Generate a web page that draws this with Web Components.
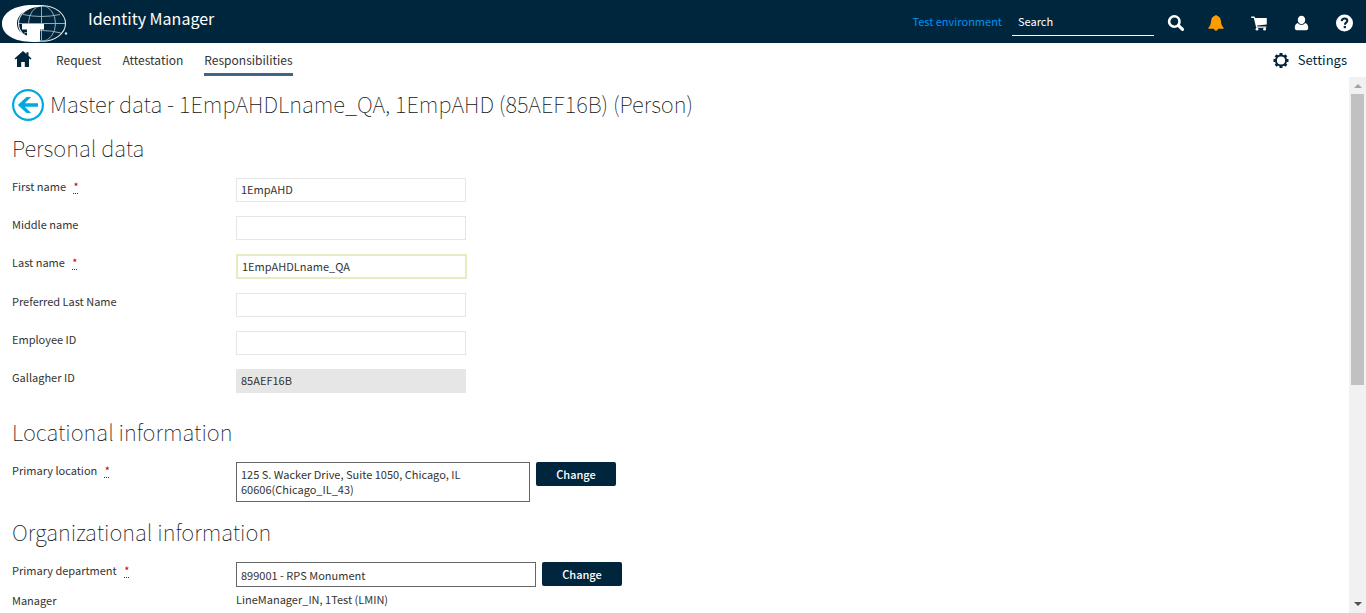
<!DOCTYPE html>
<html lang="en">
<head>
<meta charset="utf-8">
<meta name="viewport" content="width=device-width, initial-scale=1">
<title>Identity Manager</title>
<style>
  html, body { margin: 0; height: 100%; }
  body {
    --navy: #00263e;
    --ink: #333;
    --heading: #111;
    --line: #e6e6e6;
    color: var(--ink);
    background: #fff;
    font: 11px/15px "Noto Sans CJK SC", "Noto Sans", sans-serif;
  }
</style>
</head>
<body>
<idm-app></idm-app>

<script>
const define = (name, html, setup) => {
  const template = document.createElement('template');
  template.innerHTML = html;
  customElements.define(name, class extends HTMLElement {
    connectedCallback() {
      if (this.shadowRoot) return;
      this.attachShadow({ mode: 'open' }).append(template.content.cloneNode(true));
      if (setup) setup(this, this.shadowRoot);
    }
  });
};

const icons = {
  search: '<circle cx="6.3" cy="6.500" r="5.200" fill="none" stroke="currentColor" stroke-width="2.600"/><path d="M10.300 10.300l4.200 4.100" stroke="currentColor" stroke-width="3.200" stroke-linecap="round"/>',
  bell: '<path transform="translate(-2 0)" d="M7 .8C7.200-.4 8.800-.4 9 .8 11.400 1.400 12.600 3.200 12.900 6c.3 3 .7 5 2.700 6.700v1H.4v-1C2.400 11 2.800 9 3.100 6 3.400 3.200 4.600 1.400 7 .8zM6 13.700h4a2 2 0 0 1-4 0z"/>',
  cart: '<path transform="translate(-1 0)" d="M.2 1.600h3.300l.6 1.500h11.700v6.400l-9.700 1 .2 1h9v1.300H5.200L2.800 3.100H.2z"/><circle cx="5" cy="14.200" r="1.400"/><circle cx="12.600" cy="14.200" r="1.400"/>',
  user: '<path d="M7.500 .8c2.200 0 3.700 1.700 3.700 4S9.700 9.300 7.500 9.300 3.800 7.100 3.800 4.800 5.300.8 7.500 .8zM3.800 8c2 2.600 5.400 2.600 7.400 0 2.200.5 3 2.500 3 5 0 1.300-.7 2.200-2 2.200H2.800c-1.300 0-2-.9-2-2.200 0-2.500.8-4.500 3-5z"/>',
  help: '<circle cx="8.500" cy="8" r="8.500"/><path d="M5.700 6.100C5.800 4.200 7 3.400 8.600 3.400c1.600 0 2.700.9 2.700 2.300 0 2-2.400 1.900-2.400 4" fill="none" stroke="#00263e" stroke-width="2"/><rect x="7.700" y="11" width="2.200" height="2.200" fill="#00263e"/>',
  home: '<path d="M8 0l3.500 3V1.300h2v3.400L16.500 7.600l-1 1L14 7.600V16H9.800v-5H6.200v5H2V7.600L.5 8.600l-1-1z"/>',
  gear: '<circle cx="8" cy="8.500" r="5.100" fill="none" stroke="currentColor" stroke-width="2"/><path d="M8 1v2M8 14v2M.5 8.500h2M13.500 8.500h2M2.700 3.200l1.500 1.500M11.800 12.300l1.500 1.500M2.700 13.800l1.500-1.500M11.800 4.700l1.500-1.500" stroke="currentColor" stroke-width="3"/>',
  back: '<circle cx="16" cy="16" r="14.900" fill="#fff" stroke="currentColor" stroke-width="2.200"/><path d="M5.800 16L14.500 8h4.600l-6.300 6.200H26v3.600H12.800l6.300 6.200h-4.600z"/>'
};

define('idm-icon', `
  <style>
    :host { display: block; width: 16px; height: 16px; }
    svg { display: block; width: 100%; height: 100%; overflow: visible; fill: currentColor; }
  </style>
  <svg aria-hidden="true"></svg>
`, (el, root) => {
  const svg = root.querySelector('svg');
  const name = el.getAttribute('name');
  svg.setAttribute('viewBox', name === 'back' ? '0 0 32 32' : '0 0 16 16');
  svg.innerHTML = icons[name];
});

define('idm-logo', `
  <style>:host { display: block; width: 70px; height: 43px; } svg { display: block; }</style>
  <svg width="70" height="43" viewBox="0 0 70 43" role="img" aria-label="Company globe logo">
    <g fill="none" stroke="#a9b8c2" stroke-width=".9">
      <ellipse cx="42" cy="23.500" rx="23.500" ry="17.800" stroke="#e4eaee" stroke-width="1.100"/>
      <ellipse cx="42" cy="23.500" rx="13.500" ry="17.800"/>
      <path d="M41.500 6v35M19 23.500h46M23 14.500q18.500 4 37 0M24 33q18-5 37 0"/>
    </g>
    <path fill="#fff" d="M45 5.700C41 5.100 37 5 33 5 14 5 2 13 2 23.800 2 34.500 14 42 33 42c3 0 5-.3 7-.6V29.500h4V24H22v5.500h5V35.500c-6-2-10-5.500-10-12C17 15 25 7.500 45 5.700z"/>
    <circle cx="66" cy="33.500" r="1.200" fill="#dbe3e8"/>
  </svg>
`);

define('idm-header', `
  <style>
    :host { display: flex; height: 43px; background: var(--navy); color: #fff; padding-right: 14px; }
    h1 { margin: 0 auto 0 18px; font-size: 16px; line-height: 36px; font-weight: 400; }
    .env { line-height: 42px; color: #0092f0; margin-right: 10px; }
    input {
      box-sizing: border-box; width: 142px; height: 29px; margin: 7px 14px 0 0; padding: 0 6px;
      border: 0; border-bottom: 1px solid #fff; background: none; color: #fff; font: inherit; outline: 0;
    }
    input::placeholder { color: #fff; opacity: 1; }
    nav { display: flex; gap: 26px; align-items: center; padding-top: 3px; }
    button { border: 0; padding: 0; background: none; color: inherit; display: block; cursor: pointer; }
    .alert { color: #ff9c00; }
  </style>
  <idm-logo></idm-logo>
  <h1>Identity Manager</h1>
  <span class="env">Test environment</span>
  <input type="text" placeholder="Search" aria-label="Search">
  <nav aria-label="Tools">
    <button aria-label="Start search"><idm-icon name="search"></idm-icon></button>
    <button aria-label="Notifications" class="alert"><idm-icon name="bell"></idm-icon></button>
    <button aria-label="Shopping cart"><idm-icon name="cart"></idm-icon></button>
    <button aria-label="My account"><idm-icon name="user"></idm-icon></button>
    <button aria-label="Help"><idm-icon name="help"></idm-icon></button>
  </nav>
`);

define('idm-menu', `
  <style>
    :host { display: flex; height: 34px; padding: 0 19px 0 15px; align-items: flex-start; }
    a { color: var(--ink); text-decoration: none; line-height: 30px; padding-top: 2px; }
    .home { color: var(--navy); padding: 8px 25px 0 0; }
    .links { display: flex; gap: 21px; margin-right: auto; }
    .links a { height: 28px; font-size: 12px; border-bottom: 3px solid transparent; }
    .links a.current { border-color: #3f6684; }
    .settings { display: flex; gap: 9px; align-items: center; font-size: 13px; color: var(--navy); }
  </style>
  <a href="#home" class="home" aria-label="Home"><idm-icon name="home"></idm-icon></a>
  <div class="links">
    <a href="#request">Request</a>
    <a href="#attestation">Attestation</a>
    <a href="#responsibilities" class="current">Responsibilities</a>
  </div>
  <a href="#settings" class="settings"><idm-icon name="gear"></idm-icon>Settings</a>
`);

define('idm-section', `
  <style>
    :host { display: block; }
    h2 { margin: 0; font-size: 22px; line-height: 30px; font-weight: 100; color: var(--heading); }
    .rows { display: grid; gap: 14px; padding-top: 16px; }
    :host([dense]) .rows { gap: 5px; }
  </style>
  <h2></h2>
  <div class="rows"><slot></slot></div>
`, (el, root) => { root.querySelector('h2').textContent = el.getAttribute('heading'); });

define('idm-field', `
  <style>
    :host { display: grid; grid-template-columns: 224px 1fr; align-items: start; }
    .label { line-height: 16px; }
    abbr { margin-left: 5px; color: #c00000; text-decoration: underline dotted 1px; text-underline-offset: 2px; }
    .control { display: flex; gap: 6px; align-items: flex-start; }
    input, textarea {
      box-sizing: border-box; width: 230px; height: 24px; margin: 0; padding: 0 4px 2px;
      border: 1px solid var(--line); border-radius: 0; background: #fff; color: var(--ink);
      font: inherit; outline: 0; resize: none;
    }
    :host([kind="changed"]) input { width: 231px; height: 25px; border: 2px solid #e8ebc0; }
    :host([kind="locked"]) input { background: var(--line); }
    :host([kind="pick"]) input { width: 300px; height: 25px; padding: 0 4px; border-color: #666; }
    textarea { display: block; width: 294px; height: 40px; padding: 4px; border-color: #666; overflow: hidden; }
    button {
      width: 80px; height: 24px; padding: 0; border: 0; border-radius: 2px;
      background: var(--navy); color: #fff; font: inherit; font-weight: 500; cursor: pointer;
    }
  </style>
`, (el, root) => {
  const kind = el.getAttribute('kind');
  const label = document.createElement(kind === 'text' ? 'span' : 'label');
  label.className = 'label';
  label.textContent = el.getAttribute('label');
  if (el.hasAttribute('required')) {
    label.append(' ');
    const mark = document.createElement('abbr');
    mark.title = 'Required';
    mark.textContent = '*';
    label.append(mark);
  }
  const control = document.createElement('div');
  control.className = 'control';
  const value = el.getAttribute('value') || '';
  if (kind === 'text') {
    control.textContent = value;
  } else {
    const box = document.createElement(kind === 'area' ? 'textarea' : 'input');
    box.id = 'box';
    label.htmlFor = 'box';
    box.value = value;
    box.readOnly = kind === 'locked' || kind === 'pick' || kind === 'area';
    control.append(box);
    if (kind === 'pick' || kind === 'area') {
      const button = document.createElement('button');
      button.textContent = 'Change';
      control.append(button);
    }
  }
  root.append(label, control);
});

define('idm-scrollbar', `
  <style>
    :host { display: flex; flex-direction: column; width: 17px; background: #f1f1f1; }
    svg { display: block; flex: none; }
    .track { flex: 1; padding: 0 2px; }
    .thumb { height: 58%; background: #c1c1c1; }
  </style>
  <svg width="17" height="17" aria-hidden="true"><path d="M5 11l4-4 4 4z" fill="#a3a3a3"/></svg>
  <div class="track"><div class="thumb"></div></div>
  <svg width="17" height="17" aria-hidden="true"><path d="M5 6h8l-4 4z" fill="#505050"/></svg>
`);

define('idm-app', `
  <style>
    :host { display: flex; flex-direction: column; height: 100vh; }
    .body { display: flex; flex: 1; min-height: 0; }
    main { flex: 1; min-width: 0; overflow-y: auto; scrollbar-width: none; padding: 10px 12px 0; }
    .title { display: flex; gap: 6px; align-items: flex-start; }
    .title a { color: #00a9e0; padding-top: 2px; }
    .title idm-icon { width: 32px; height: 32px; }
    h1 { margin: 0; font-size: 22px; line-height: 32px; font-weight: 100; color: var(--heading); }
    .sections { display: flex; flex-direction: column; gap: 14px; padding-top: 11px; }
    .sections > :first-child { margin-bottom: 9px; }
  </style>
  <idm-header></idm-header>
  <idm-menu></idm-menu>
  <div class="body">
    <main>
      <div class="title">
        <a href="#back" aria-label="Back"><idm-icon name="back"></idm-icon></a>
        <h1>Master data - 1EmpAHDLname_QA, 1EmpAHD (85AEF16B) (Person)</h1>
      </div>
      <div class="sections">
        <idm-section heading="Personal data">
          <idm-field label="First name" required value="1EmpAHD"></idm-field>
          <idm-field label="Middle name"></idm-field>
          <idm-field label="Last name" required kind="changed" value="1EmpAHDLname_QA"></idm-field>
          <idm-field label="Preferred Last Name"></idm-field>
          <idm-field label="Employee ID"></idm-field>
          <idm-field label="Gallagher ID" kind="locked" value="85AEF16B"></idm-field>
        </idm-section>
        <idm-section heading="Locational information">
          <idm-field label="Primary location" required kind="area" value="125 S. Wacker Drive, Suite 1050, Chicago, IL 60606(Chicago_IL_43)"></idm-field>
        </idm-section>
        <idm-section heading="Organizational information" dense>
          <idm-field label="Primary department" required kind="pick" value="899001 - RPS Monument"></idm-field>
          <idm-field label="Manager" kind="text" value="LineManager_IN, 1Test (LMIN)"></idm-field>
        </idm-section>
      </div>
    </main>
    <idm-scrollbar></idm-scrollbar>
  </div>
`);
</script>
</body>
</html>
